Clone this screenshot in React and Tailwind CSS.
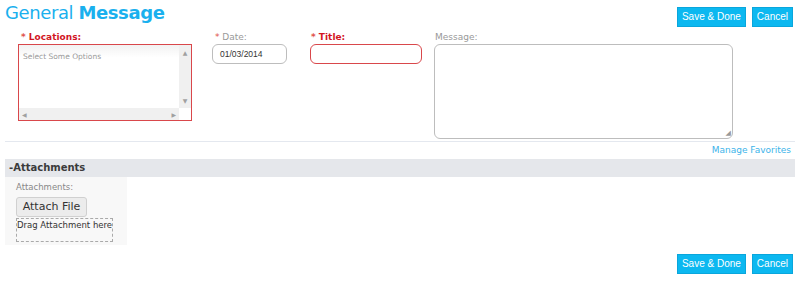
import React from "react";

const Btn = ({ children }) => (
  <button className="h-[20px] bg-[#0cb8f0] px-[4px] text-[10px] leading-[18px] text-white border border-[#0aa6dc] font-['Liberation_Sans',Arial,sans-serif]">
    {children}
  </button>
);

const App = () => {
  return (
    <div className="w-[800px] h-[281px] bg-white font-['DejaVu_Sans',Verdana,sans-serif] text-[#333]">
      {/* header */}
      <div className="flex items-start justify-between pl-[5px] pr-[7px]">
        <h1 className="text-[18px] leading-[26px] text-[#1ab0ee] tracking-[-0.4px]">
          General <span className="font-bold">Message</span>
        </h1>
        <div className="flex gap-[6px] pt-[7px]">
          <Btn>Save &amp; Done</Btn>
          <Btn>Cancel</Btn>
        </div>
      </div>

      {/* form row */}
      <div className="flex items-start pt-[5px]">
        <div className="ml-[18px] w-[174px]">
          <div className="pl-[3px] text-[9px] leading-[10px] font-bold text-[#d2161f]">
            <span className="text-[#e0524a]">*</span> Locations:
          </div>
          <div className="mt-[2px] h-[77px] border border-[#d9474b] flex flex-col">
            <div className="flex flex-1">
              <div className="flex-1 bg-gradient-to-b from-[#f2f2f2] to-white to-[20%] pl-[4px] pt-[6px] text-[7.5px] text-[#999]">
                Select Some Options
              </div>
              <div className="w-[12px] bg-[#f0f0f0] flex flex-col items-center justify-between py-[3px] text-[6px] text-[#a0a0a0]">
                <span>▲</span>
                <span>▼</span>
              </div>
            </div>
            <div className="flex h-[12px]">
              <div className="flex-1 bg-[#f0f0f0] flex items-center justify-between px-[3px] text-[6px] text-[#a0a0a0]">
                <span>◀</span>
                <span>▶</span>
              </div>
              <div className="w-[12px] bg-white" />
            </div>
          </div>
        </div>

        <div className="ml-[20px] w-[75px]">
          <div className="pl-[3px] text-[9px] leading-[10px] text-[#999]">
            <span className="text-[#e0524a]">*</span> Date:
          </div>
          <div className="mt-[2px] h-[20px] rounded-[6px] border border-[#bdbdbd] pl-[7px] text-[8.5px] leading-[18px] text-[#333] font-['Liberation_Sans',Arial,sans-serif]">
            01/03/2014
          </div>
        </div>

        <div className="ml-[23px] w-[112px]">
          <div className="pl-[1px] text-[9px] leading-[10px] font-bold text-[#d2161f]">
            <span className="text-[#e0524a]">*</span> Title:
          </div>
          <div className="mt-[2px] h-[20px] rounded-[6px] border border-[#d9474b]" />
        </div>

        <div className="ml-[12px] w-[299px]">
          <div className="pl-[1px] text-[9px] leading-[10px] text-[#999]">Message:</div>
          <div className="relative mt-[2px] h-[95px] rounded-[6px] border border-[#bdbdbd]">
            <span className="absolute bottom-[1px] right-[1px] text-[7px] leading-[7px] text-[#999]">◢</span>
          </div>
        </div>
      </div>

      {/* divider */}
      <div className="mx-[5px] mt-[2px] border-t border-[#e4e8ef]" />
      <div className="flex justify-end pr-[9px] pt-[3px] text-[9px] leading-[10px] text-[#3db4ea]">
        Manage Favorites
      </div>

      {/* attachments */}
      <div className="mx-[5px] mt-[4px] h-[18px] bg-[#e5e7eb] pl-[4px] text-[10px] leading-[18px] font-bold text-[#3b3b3b]">
        -Attachments
      </div>
      <div className="ml-[5px] w-[122px] h-[68px] bg-[#f8f8f8] pl-[11px] pt-[5px]">
        <div className="text-[8.5px] leading-[11px] text-[#888]">Attachments:</div>
        <button className="mt-[1px] h-[20px] w-[71px] rounded-[3px] border border-[#d0d0d0] bg-[#ececec] text-[11px] text-[#333]">
          Attach File
        </button>
        <div className="mt-[1px] h-[24px] w-fit whitespace-nowrap border border-dashed border-[#aaa] text-[8.5px] leading-[12px] text-[#333]">
          Drag Attachment here
        </div>
      </div>

      {/* bottom buttons */}
      <div className="flex justify-end gap-[6px] pr-[7px] pt-[9px]">
        <Btn>Save &amp; Done</Btn>
        <Btn>Cancel</Btn>
      </div>
    </div>
  );
};

export default App;
